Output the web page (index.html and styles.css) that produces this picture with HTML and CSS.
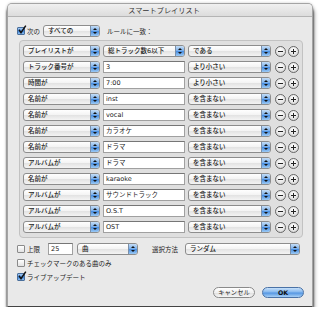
FILE: index.html
```html
<!DOCTYPE html>
<html lang="ja">
<head>
<meta charset="utf-8">
<link rel="stylesheet" href="styles.css">
</head>
<body>
<div class="window">
  <div class="titlebar">スマートプレイリスト</div>
  <div class="content">
    <div class="match-row">
      <span class="checkbox checked"><svg viewBox="0 0 10 10" width="10" height="10"><path d="M2 4.8 L4 7.6 L8.8 0.6" fill="none" stroke="#111" stroke-width="1.5"/></svg></span>
      <span class="label">次の</span>
      <span class="popup w-all"><span class="ptext">すべての</span><span class="stepper"></span></span>
      <span class="label">ルールに一致：</span>
    </div>
    <div class="rules">
      <div class="rule">
        <span class="popup c1"><span class="ptext">プレイリストが</span><span class="stepper"></span></span>
        <span class="popup c2"><span class="ptext">総トラック数6以下</span><span class="stepper"></span></span>
        <span class="popup c3"><span class="ptext">である</span><span class="stepper"></span></span>
        <span class="round minus"></span><span class="round plus"></span>
      </div>
      <div class="rule">
        <span class="popup c1"><span class="ptext">トラック番号が</span><span class="stepper"></span></span>
        <span class="field c2">3</span>
        <span class="popup c3"><span class="ptext">より小さい</span><span class="stepper"></span></span>
        <span class="round minus"></span><span class="round plus"></span>
      </div>
      <div class="rule">
        <span class="popup c1"><span class="ptext">時間が</span><span class="stepper"></span></span>
        <span class="field c2">7:00</span>
        <span class="popup c3"><span class="ptext">より小さい</span><span class="stepper"></span></span>
        <span class="round minus"></span><span class="round plus"></span>
      </div>
      <div class="rule">
        <span class="popup c1"><span class="ptext">名前が</span><span class="stepper"></span></span>
        <span class="field c2">inst</span>
        <span class="popup c3"><span class="ptext">を含まない</span><span class="stepper"></span></span>
        <span class="round minus"></span><span class="round plus"></span>
      </div>
      <div class="rule">
        <span class="popup c1"><span class="ptext">名前が</span><span class="stepper"></span></span>
        <span class="field c2">vocal</span>
        <span class="popup c3"><span class="ptext">を含まない</span><span class="stepper"></span></span>
        <span class="round minus"></span><span class="round plus"></span>
      </div>
      <div class="rule">
        <span class="popup c1"><span class="ptext">名前が</span><span class="stepper"></span></span>
        <span class="field c2">カラオケ</span>
        <span class="popup c3"><span class="ptext">を含まない</span><span class="stepper"></span></span>
        <span class="round minus"></span><span class="round plus"></span>
      </div>
      <div class="rule">
        <span class="popup c1"><span class="ptext">名前が</span><span class="stepper"></span></span>
        <span class="field c2">ドラマ</span>
        <span class="popup c3"><span class="ptext">を含まない</span><span class="stepper"></span></span>
        <span class="round minus"></span><span class="round plus"></span>
      </div>
      <div class="rule">
        <span class="popup c1"><span class="ptext">アルバムが</span><span class="stepper"></span></span>
        <span class="field c2">ドラマ</span>
        <span class="popup c3"><span class="ptext">を含まない</span><span class="stepper"></span></span>
        <span class="round minus"></span><span class="round plus"></span>
      </div>
      <div class="rule">
        <span class="popup c1"><span class="ptext">名前が</span><span class="stepper"></span></span>
        <span class="field c2">karaoke</span>
        <span class="popup c3"><span class="ptext">を含まない</span><span class="stepper"></span></span>
        <span class="round minus"></span><span class="round plus"></span>
      </div>
      <div class="rule">
        <span class="popup c1"><span class="ptext">アルバムが</span><span class="stepper"></span></span>
        <span class="field c2">サウンドトラック</span>
        <span class="popup c3"><span class="ptext">を含まない</span><span class="stepper"></span></span>
        <span class="round minus"></span><span class="round plus"></span>
      </div>
      <div class="rule">
        <span class="popup c1"><span class="ptext">アルバムが</span><span class="stepper"></span></span>
        <span class="field c2">O.S.T</span>
        <span class="popup c3"><span class="ptext">を含まない</span><span class="stepper"></span></span>
        <span class="round minus"></span><span class="round plus"></span>
      </div>
      <div class="rule">
        <span class="popup c1"><span class="ptext">アルバムが</span><span class="stepper"></span></span>
        <span class="field c2">OST</span>
        <span class="popup c3"><span class="ptext">を含まない</span><span class="stepper"></span></span>
        <span class="round minus"></span><span class="round plus"></span>
      </div>
    </div>
    <div class="options">
      <div class="opt-row">
        <span class="checkbox"></span>
        <span class="label lim">上限</span>
        <span class="field w-num">25</span>
        <span class="popup w-unit"><span class="ptext">曲</span><span class="stepper"></span></span>
        <span class="label sel">選択方法</span>
        <span class="popup w-method"><span class="ptext">ランダム</span><span class="stepper"></span></span>
      </div>
      <div class="opt-row">
        <span class="checkbox"></span>
        <span class="label">チェックマークのある曲のみ</span>
      </div>
      <div class="opt-row">
        <span class="checkbox checked"><svg viewBox="0 0 10 10" width="10" height="10"><path d="M2 4.8 L4 7.6 L8.8 0.6" fill="none" stroke="#111" stroke-width="1.5"/></svg></span>
        <span class="label">ライブアップデート</span>
      </div>
    </div>
    <div class="footer">
      <span class="button cancel">キャンセル</span>
      <span class="button ok">OK</span>
    </div>
  </div>
</div>
</body>
</html>
```
FILE: styles.css
```css
* { box-sizing: border-box; }
html, body { margin: 0; padding: 0; background: #ffffff; }
body {
  font-family: "DejaVu Sans", "Noto Sans CJK JP", sans-serif;
  font-size: 6.5px;
  color: #222;
}
.window {
  margin: 3px 0 0 7px;
  width: 306px;
  height: 304px;
  background: #e9e9e9;
  border: 1px solid #a4a4a4;
  border-bottom-color: #444;
  border-radius: 5px 5px 0 0;
  box-shadow: 0 4px 2px rgba(0,0,0,0.95), 1px 5px 4px rgba(0,0,0,0.5), 0 0 3px rgba(0,0,0,0.2);
}
.titlebar {
  height: 13px;
  border-bottom: 1px solid #b4b4b4;
  border-radius: 4px 4px 0 0;
  background: linear-gradient(#f0f0f0, #dcdcdc);
  font-family: "Noto Sans CJK JP", sans-serif;
  font-size: 7.2px;
  color: #333;
  display: flex;
  align-items: center;
  justify-content: center;
  padding-left: 8px;
}
.content {
  padding: 8px 8px 0 9px;
}
.match-row, .opt-row {
  display: flex;
  align-items: center;
  height: 12px;
}
.checkbox {
  width: 8px;
  height: 8px;
  border: 1px solid #8a8a8a;
  border-radius: 1px;
  background: linear-gradient(#ffffff, #e2e2e2);
  position: relative;
  flex: none;
}
.checkbox.checked {
  background: linear-gradient(#a9cdf5, #3f86dc 55%, #8fc0f2);
  border-color: #4a6f9c;
}
.checkbox svg {
  position: absolute;
  left: -1px;
  top: -3px;
}
.label {
  margin-left: 2px;
  white-space: nowrap;
  font-family: "Noto Sans CJK JP", sans-serif;
}
.match-row .popup { margin-left: 3px; margin-right: 5px; }
.w-all { width: 57px; }
.popup {
  display: flex;
  height: 12px;
  border: 1px solid #8d8d8d;
  border-radius: 3px;
  background: linear-gradient(#ffffff, #f3f3f3 50%, #e2e2e2 51%, #f4f4f4);
  overflow: hidden;
  flex: none;
}
.ptext {
  flex: 1;
  padding-left: 4px;
  line-height: 10px;
  white-space: nowrap;
  overflow: hidden;
  font-weight: 500;
}
.stepper {
  width: 9px;
  flex: none;
  border-left: 1px solid #7b8fa8;
  background: linear-gradient(#c4ddf7, #7fb2ec 45%, #4b8fe0 55%, #9ccaf5);
  position: relative;
}
.stepper::before, .stepper::after {
  content: "";
  position: absolute;
  left: 2px;
  border-left: 2px solid transparent;
  border-right: 2px solid transparent;
}
.stepper::before { top: 2px; border-bottom: 2px solid #111; }
.stepper::after { top: 6px; border-top: 2px solid #111; }
.rules {
  margin: 3px 1px 0 2px;
  height: 198px;
  border: 1px solid #c2c2c2;
  border-radius: 4px;
  background: #dfdfdf;
  padding: 4px 2px 4px 3px;
  display: flex;
  flex-direction: column;
  gap: 4px;
}
.rule {
  display: flex;
  align-items: center;
  height: 12px;
}
.c1 { width: 77px; }
.c2 { width: 82px; margin-left: 3px; }
.c3 { width: 83px; margin-left: 3px; }
.field {
  height: 12px;
  background: #ffffff;
  border: 1px solid #a0a0a0;
  border-top-color: #767676;
  padding-left: 2px;
  line-height: 10px;
  white-space: nowrap;
  flex: none;
}
.round {
  width: 11px;
  height: 11px;
  border: 1px solid #666;
  border-radius: 50%;
  background: radial-gradient(circle at 50% 35%, #ffffff, #e4e4e4 60%, #c8c8c8);
  position: relative;
  flex: none;
}
.minus { margin-left: 4px; }
.plus { margin-left: 2px; }
.round::before {
  content: "";
  position: absolute;
  left: 2px;
  top: 4px;
  width: 5px;
  height: 1.3px;
  background: #222;
}
.plus::after {
  content: "";
  position: absolute;
  left: 4px;
  top: 2px;
  width: 1.3px;
  height: 5px;
  background: #222;
}
.options {
  margin-top: 5px;
  display: flex;
  flex-direction: column;
  gap: 2px;
}
.lim { margin-right: 8px; }
.w-num { width: 25px; }
.w-unit { width: 61px; margin-left: 4px; }
.sel { margin-left: 14px; margin-right: 7px; }
.w-method { width: 115px; }
.footer {
  margin-top: 4px;
  display: flex;
  justify-content: flex-end;
  gap: 7px;
}
.button {
  width: 42px;
  height: 11px;
  border-radius: 6px;
  display: flex;
  align-items: center;
  justify-content: center;
  font-family: "Noto Sans CJK JP", sans-serif;
  font-size: 6.3px;
}
.cancel {
  border: 1px solid #8a8a8a;
  background: linear-gradient(#ffffff, #f0f0f0 50%, #dedede 51%, #f6f6f6);
}
.ok {
  border: 1px solid #4a72a6;
  background: linear-gradient(#c6e0fa, #86b8ee 45%, #5596e2 55%, #a8d0f6);
  font-family: "DejaVu Sans", sans-serif;
  font-weight: bold;
  color: #111;
}
```
